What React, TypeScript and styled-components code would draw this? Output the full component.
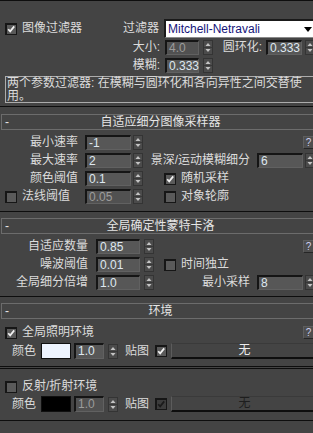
import React from 'react';
import styled, { createGlobalStyle } from 'styled-components';

const GlobalStyle = createGlobalStyle`
  html, body {
    margin: 0;
    padding: 0;
    background: #444444;
  }
  body {
    font-family: "Liberation Sans", "Noto Sans CJK SC", sans-serif;
    font-size: 12px;
    color: #dcdcdc;
  }
`;

const Screen = styled.div`
  width: 313px;
  height: 433px;
  overflow: hidden;
  background: #444444;
`;

const Panel = styled.div`
  width: 320px;
  display: flex;
  flex-direction: column;
`;

const Rule = styled.div<{ $top?: number; $double?: boolean }>`
  flex: none;
  margin-top: ${p => p.$top ?? 0}px;
  height: ${p => (p.$double ? 1 : 0)}px;
  border-top: 1px solid #0e0e0e;
  border-bottom: ${p => (p.$double ? '1px solid #0e0e0e' : 'none')};
`;

const RolloutHeader = styled.div<{ $top: number }>`
  flex: none;
  box-sizing: border-box;
  margin: ${p => p.$top}px 0 0 1px;
  height: 16px;
  border: 1px solid #6c6c6c;
  display: grid;
  grid-template-columns: 18px 1fr 18px;
  align-items: center;
  line-height: 14px;
  font-size: 12px;
  color: #e6e6e6;
`;

const Collapse = styled.span`
  padding-left: 3px;
  font-size: 12px;
`;

const HeaderTitle = styled.span`
  text-align: center;
  white-space: nowrap;
`;

const Row = styled.div<{ $top?: number; $h?: number; $pl?: number }>`
  flex: none;
  display: flex;
  align-items: center;
  height: ${p => p.$h ?? 15}px;
  margin-top: ${p => p.$top ?? 3}px;
  padding-left: ${p => p.$pl ?? 0}px;
  line-height: 15px;
  white-space: nowrap;
`;

const Cell = styled.div<{ $w?: number; $pl?: number }>`
  flex: none;
  display: flex;
  align-items: center;
  width: ${p => (p.$w ? `${p.$w}px` : 'auto')};
  padding-left: ${p => p.$pl ?? 0}px;
`;

const Label = styled.span<{ $w?: number; $mr?: number; $left?: boolean }>`
  flex: none;
  display: flex;
  align-items: center;
  justify-content: ${p => (p.$left ? 'flex-start' : 'flex-end')};
  width: ${p => (p.$w ? `${p.$w}px` : 'auto')};
  margin-right: ${p => p.$mr ?? 0}px;
  color: #dcdcdc;
`;

const CheckText = styled.span<{ $w?: number }>`
  margin-left: 5px;
  width: ${p => (p.$w ? `${p.$w}px` : 'auto')};
  color: #dcdcdc;
`;

const NumField = styled.div<{ $w: number; $mr?: number; $disabled?: boolean; $h?: number }>`
  flex: none;
  box-sizing: border-box;
  width: ${p => p.$w}px;
  height: ${p => p.$h ?? 15}px;
  margin-right: ${p => p.$mr ?? 0}px;
  background: ${p => (p.$disabled ? '#515151' : '#575757')};
  border-top: 2px solid #151515;
  border-left: 2px solid #151515;
  border-right: 1px solid #616161;
  border-bottom: 1px solid #616161;
  padding-left: 2px;
  font-family: "Liberation Sans", sans-serif;
  font-size: 12px;
  line-height: 12px;
  color: ${p => (p.$disabled ? '#9c9c9c' : '#dfe8f0')};
`;

const Select = styled.div`
  flex: none;
  box-sizing: border-box;
  width: 154px;
  height: 19px;
  background: #ffffff;
  border-top: 2px solid #1a1a1a;
  border-left: 2px solid #1a1a1a;
  border-bottom: 1px solid #8a8a8a;
  display: flex;
  align-items: center;
  justify-content: space-between;
  padding: 0 6px 0 2px;
  font-family: "Liberation Sans", sans-serif;
  font-size: 12px;
  color: #14147a;
`;

const Desc = styled.div`
  flex: none;
  margin: 3px 0 0 5px;
  height: 25px;
  border-top: 1px solid #acacac;
  border-left: 1px solid #acacac;
  border-bottom: 1px solid #acacac;
  padding-left: 1px;
  font-size: 12px;
  line-height: 12.5px;
  color: #dcdcdc;
  white-space: nowrap;
`;

const HelpButton = styled.div<{ $ml?: number }>`
  flex: none;
  box-sizing: border-box;
  width: 11px;
  height: 13px;
  margin-left: ${p => (p.$ml !== undefined ? `${p.$ml}px` : 'auto')};
  background: #4e4e4e;
  border-top: 1px solid #5e5e5e;
  border-left: 1px solid #5e5e5e;
  border-right: 1px solid #262626;
  border-bottom: 1px solid #262626;
  display: flex;
  align-items: center;
  justify-content: center;
  font-family: "Liberation Sans", sans-serif;
  font-size: 10px;
  line-height: 11px;
  color: #cfcfee;
`;

const Swatch = styled.div<{ $color: string; $mr?: number }>`
  flex: none;
  box-sizing: border-box;
  width: 30px;
  height: 16px;
  margin-right: ${p => p.$mr ?? 0}px;
  background: ${p => p.$color};
  border: 1px solid #101010;
`;

const MapButton = styled.div<{ $disabled?: boolean }>`
  flex: none;
  box-sizing: border-box;
  width: 146px;
  height: 16px;
  border-top: 1px solid #3a3a3a;
  border-left: 1px solid #5c5c5c;
  border-bottom: 2px solid #0e0e0e;
  display: flex;
  align-items: center;
  justify-content: center;
  line-height: 13px;
  color: ${p => (p.$disabled ? '#1e1e1e' : '#ececec')};
`;

const SpinBox = styled.div<{ $mr?: number }>`
  flex: none;
  display: flex;
  margin-right: ${p => p.$mr ?? 0}px;
`;

const CheckWrap = styled.span`
  flex: none;
  display: flex;
`;

const Spinner = ({ mr }: { mr?: number }) => (
  <SpinBox $mr={mr}>
    <svg width="10" height="15" viewBox="0 0 10 15">
      <rect x="0.5" y="0.5" width="9" height="14" fill="#4b4b4b" stroke="#343434" />
      <line x1="1" y1="7.5" x2="9" y2="7.5" stroke="#383838" />
      <path d="M5 3 L7.5 6 L2.5 6 Z" fill="#c4c4c4" />
      <path d="M2.5 9 L7.5 9 L5 12 Z" fill="#c4c4c4" />
    </svg>
  </SpinBox>
);

const Check = ({ on, disabled }: { on?: boolean; disabled?: boolean }) => (
  <CheckWrap>
    <svg width="12" height="12" viewBox="0 0 12 12">
      <rect x="0" y="0" width="12" height="12" fill="#161616" />
      <rect x="2" y="2" width="9" height="9" fill={disabled ? '#3c3c3c' : '#5a5a5a'} />
      {on && (
        <path
          d="M3.2 6.2 L5.2 8.4 L9.2 3.4"
          fill="none"
          stroke={disabled ? '#1a1a1a' : '#f2f2f2'}
          strokeWidth="1.7"
        />
      )}
    </svg>
  </CheckWrap>
);

const Arrow = () => (
  <svg width="8" height="5" viewBox="0 0 8 5">
    <path d="M0 0 L8 0 L4 5 Z" fill="#000" />
  </svg>
);

export default function App() {
  return (
    <>
      <GlobalStyle />
      <Screen>
        <Panel>
          <Rule />
          <Row $top={18} $h={19} $pl={5}>
            <Check on />
            <CheckText $w={96}>图像过滤器</CheckText>
            <Label $w={41} $mr={5}>过滤器</Label>
            <Select>
              <span>Mitchell-Netravali</span>
              <Arrow />
            </Select>
          </Row>
          <Row $top={2}>
            <Label $w={160} $mr={5}>大小:</Label>
            <NumField $w={34} $mr={4} $disabled>4.0</NumField>
            <Spinner />
            <Label $w={49} $mr={4}>圆环化:</Label>
            <NumField $w={36} $mr={3}>0.333</NumField>
            <Spinner />
          </Row>
          <Row>
            <Label $w={160} $mr={5}>模糊:</Label>
            <NumField $w={34} $mr={4}>0.333</NumField>
            <Spinner />
          </Row>
          <Desc>
            两个参数过滤器: 在模糊与圆环化和各向异性之间交替使
            <br />
            用。
          </Desc>

          <Rule $top={3} />
          <RolloutHeader $top={7}>
            <Collapse>-</Collapse>
            <HeaderTitle>自适应细分图像采样器</HeaderTitle>
          </RolloutHeader>
          <Row $top={5}>
            <Cell $w={150}>
              <Label $w={78} $mr={7}>最小速率</Label>
              <NumField $w={46} $mr={2}>-1</NumField>
              <Spinner />
            </Cell>
            <HelpButton $ml={153}>?</HelpButton>
          </Row>
          <Row>
            <Cell $w={150}>
              <Label $w={78} $mr={7}>最大速率</Label>
              <NumField $w={46} $mr={2}>2</NumField>
              <Spinner />
            </Cell>
            <Label $w={100} $mr={7}>景深/运动模糊细分</Label>
            <NumField $w={46} $mr={2}>6</NumField>
            <Spinner />
          </Row>
          <Row>
            <Cell $w={150}>
              <Label $w={78} $mr={7}>颜色阈值</Label>
              <NumField $w={46} $mr={2}>0.1</NumField>
              <Spinner />
            </Cell>
            <Cell $pl={14}>
              <Check on />
              <CheckText>随机采样</CheckText>
            </Cell>
          </Row>
          <Row>
            <Cell $w={150}>
              <Label $w={78} $mr={7} $left>
                <Cell $pl={5}>
                  <Check />
                  <CheckText>法线阈值</CheckText>
                </Cell>
              </Label>
              <NumField $w={46} $mr={2} $disabled>0.05</NumField>
              <Spinner />
            </Cell>
            <Cell $pl={14}>
              <Check />
              <CheckText>对象轮廓</CheckText>
            </Cell>
          </Row>

          <Rule $top={7} />
          <RolloutHeader $top={6}>
            <Collapse>-</Collapse>
            <HeaderTitle>全局确定性蒙特卡洛</HeaderTitle>
          </RolloutHeader>
          <Row $top={5}>
            <Cell $w={154}>
              <Label $w={88} $mr={8}>自适应数量</Label>
              <NumField $w={44} $mr={4}>0.85</NumField>
              <Spinner />
            </Cell>
            <HelpButton $ml={149}>?</HelpButton>
          </Row>
          <Row>
            <Cell $w={154}>
              <Label $w={88} $mr={8}>噪波阈值</Label>
              <NumField $w={44} $mr={4}>0.01</NumField>
              <Spinner />
            </Cell>
            <Cell $pl={10}>
              <Check />
              <CheckText>时间独立</CheckText>
            </Cell>
          </Row>
          <Row>
            <Cell $w={154}>
              <Label $w={88} $mr={8}>全局细分倍增</Label>
              <NumField $w={44} $mr={4}>1.0</NumField>
              <Spinner />
            </Cell>
            <Label $w={96} $mr={7}>最小采样</Label>
            <NumField $w={46} $mr={2}>8</NumField>
            <Spinner />
          </Row>

          <Rule $top={6} />
          <RolloutHeader $top={6}>
            <Collapse>-</Collapse>
            <HeaderTitle>环境</HeaderTitle>
          </RolloutHeader>
          <Row $top={7} $h={13} $pl={5}>
            <Check on />
            <CheckText $w={72}>全局照明环境</CheckText>
            <HelpButton $ml={209}>?</HelpButton>
          </Row>
          <Row $top={4} $h={16} $pl={12}>
            <Label $w={29} $left>颜色</Label>
            <Swatch $color="#eef4ff" $mr={3} />
            <NumField $w={30} $mr={4} $h={16}>1.0</NumField>
            <Spinner mr={7} />
            <Label $w={24} $mr={6} $left>贴图</Label>
            <Check on />
            <Cell $pl={4}>
              <MapButton>无</MapButton>
            </Cell>
          </Row>
          <Rule $top={7} $double />
          <Row $top={11} $h={13} $pl={5}>
            <Check />
            <CheckText>反射/折射环境</CheckText>
          </Row>
          <Row $top={3} $h={16} $pl={12}>
            <Label $w={29} $left>颜色</Label>
            <Swatch $color="#000000" $mr={3} />
            <NumField $w={30} $mr={4} $h={16} $disabled>1.0</NumField>
            <Spinner mr={7} />
            <Label $w={24} $mr={6} $left>贴图</Label>
            <Check on disabled />
            <Cell $pl={4}>
              <MapButton $disabled>无</MapButton>
            </Cell>
          </Row>
          <Rule $top={8} />
        </Panel>
      </Screen>
    </>
  );
}
